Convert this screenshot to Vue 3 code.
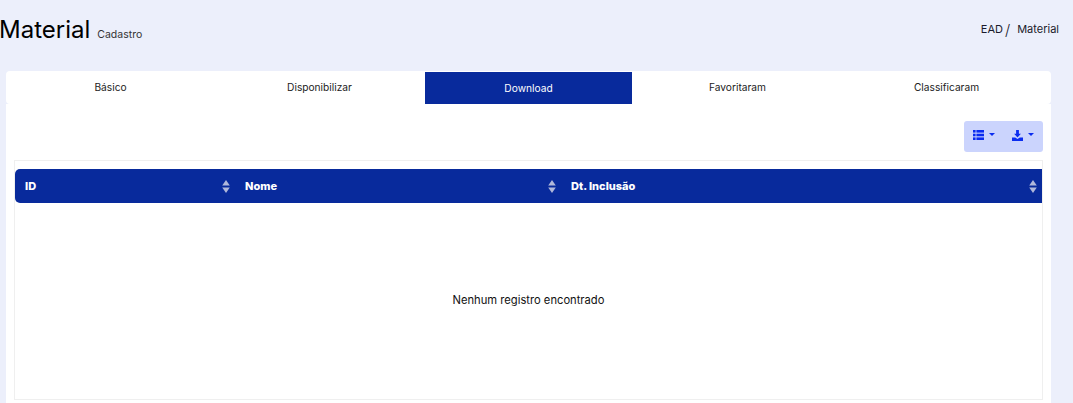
<script setup>
const tabs = [
  { id: "basico", label: "Básico" },
  { id: "disponibilizar", label: "Disponibilizar" },
  { id: "download", label: "Download" },
  { id: "favoritaram", label: "Favoritaram" },
  { id: "classificaram", label: "Classificaram" },
];
const activeTab = "download";
const columns = ["ID", "Nome", "Dt. Inclusão"];
</script>

<template>
  <div class="page">
    <header class="page-head">
      <div class="title">
        <h1>Material</h1>
        <small>Cadastro</small>
      </div>
      <nav class="crumbs">
        <span>EAD</span>
        <span class="sep">/</span>
        <span>Material</span>
      </nav>
    </header>

    <section class="card">
      <ul class="tabs">
        <li v-for="tab in tabs" :key="tab.id" :class="['tab', { active: tab.id === activeTab }]">
          {{ tab.label }}
        </li>
      </ul>

      <div class="card-body">
        <div class="toolbar">
          <div class="btn-group">
            <button class="btn" type="button">
              <svg width="11" height="10" viewBox="0 0 11 10" fill="currentColor">
                <rect x="0" y="0" width="2.6" height="2.6" />
                <rect x="0" y="3.7" width="2.6" height="2.6" />
                <rect x="0" y="7.4" width="2.6" height="2.6" />
                <rect x="3.4" y="0" width="7.6" height="2.6" />
                <rect x="3.4" y="3.7" width="7.6" height="2.6" />
                <rect x="3.4" y="7.4" width="7.6" height="2.6" />
              </svg>
              <i class="caret"></i>
            </button>
            <button class="btn" type="button">
              <svg width="11" height="11" viewBox="0 0 11 11" fill="currentColor">
                <path d="M4.1 0h2.8v3.8h2L5.5 7.4 2.1 3.8h2z" />
                <path d="M0 7.4h3.2l2.3 1.5 2.3-1.5H11V11H0z" />
              </svg>
              <i class="caret"></i>
            </button>
          </div>
        </div>

        <div class="table-box">
          <table>
            <colgroup>
              <col class="col-id" />
              <col class="col-nome" />
              <col />
            </colgroup>
            <thead>
              <tr>
                <th v-for="col in columns" :key="col">
                  <div class="th-inner">
                    <span>{{ col }}</span>
                    <svg class="sort" width="8" height="13" viewBox="0 0 8 13" fill="currentColor">
                      <path d="M4 0l3.8 5.4H.2z" />
                      <path d="M4 13L.2 7.6h7.6z" />
                    </svg>
                  </div>
                </th>
              </tr>
            </thead>
            <tbody>
              <tr>
                <td colspan="3">Nenhum registro encontrado</td>
              </tr>
            </tbody>
          </table>
        </div>
      </div>
    </section>
  </div>
</template>

<style>
html,
body {
  margin: 0;
  height: 403px;
  overflow: hidden;
  background: #eceffb;
}
</style>

<style scoped>
.page {
  font-family: Inter, "Open Sans", "Liberation Sans", sans-serif;
  color: #1b1b2b;
  height: 403px;
  overflow: hidden;
}
.page-head {
  display: flex;
  justify-content: space-between;
  align-items: flex-start;
  padding: 15px 14px 0 0;
  height: 71px;
  box-sizing: border-box;
}
.title {
  display: flex;
  align-items: baseline;
  gap: 7px;
  margin-left: -1px;
}
h1 {
  margin: 0;
  font-size: 24px;
  line-height: 29px;
  font-weight: 400;
  color: #000;
}
small {
  font-size: 10.5px;
  color: #333;
}
.crumbs {
  display: flex;
  align-items: center;
  gap: 4px;
  font-size: 11px;
  line-height: 29px;
}
.sep {
  margin: 0 3px 0 -2px;
  font-size: 15px;
  font-weight: 300;
}
.card {
  margin: 0 22px 0 6px;
  height: 347px;
}
.tabs {
  list-style: none;
  margin: 0;
  padding: 0;
  display: grid;
  grid-template-columns: repeat(5, 1fr);
  height: 33px;
  background: #fff;
  border-radius: 4px;
}
.tab {
  display: flex;
  align-items: center;
  justify-content: center;
  padding-bottom: 1px;
  font-size: 10.2px;
  color: #222;
}
.tab.active {
  background: #082a9c;
  color: #fff;
  margin: 1px 1px 0;
}
.card-body {
  height: 314px;
  box-sizing: border-box;
  padding: 17px 8px 0;
  background: #fff;
}
.toolbar {
  display: flex;
  justify-content: flex-end;
  margin-bottom: 8px;
}
.btn-group {
  display: flex;
  height: 31px;
  background: #cbd4fd;
  border-radius: 3px;
}
.btn {
  display: flex;
  align-items: center;
  gap: 5px;
  width: 39.5px;
  justify-content: center;
  padding: 0 0 3px;
  border: 0;
  background: none;
  color: #0a2cf0;
}
.caret {
  width: 0;
  height: 0;
  border-left: 3px solid transparent;
  border-right: 3px solid transparent;
  border-top: 3px solid currentColor;
  margin-top: -2px;
}
.table-box {
  border: 1px solid #efefef;
  height: 240px;
  padding-top: 8px;
  box-sizing: border-box;
}
table {
  width: 100%;
  height: 231px;
  border-collapse: collapse;
  table-layout: fixed;
}
.col-id {
  width: 220px;
}
.col-nome {
  width: 326px;
}
thead tr {
  height: 34px;
}
th {
  background: #082a9c;
  color: #fff;
  padding: 0 5px 0 10px;
  font-size: 11px;
  font-weight: 800;
  text-align: left;
}
th:first-child {
  border-radius: 5px 0 0 5px;
}
.th-inner {
  display: flex;
  justify-content: space-between;
  align-items: center;
}
.sort {
  color: #b0b8da;
}
td {
  text-align: center;
  font-size: 11.2px;
  color: #111;
  padding: 0 0 3px;
}
</style>
